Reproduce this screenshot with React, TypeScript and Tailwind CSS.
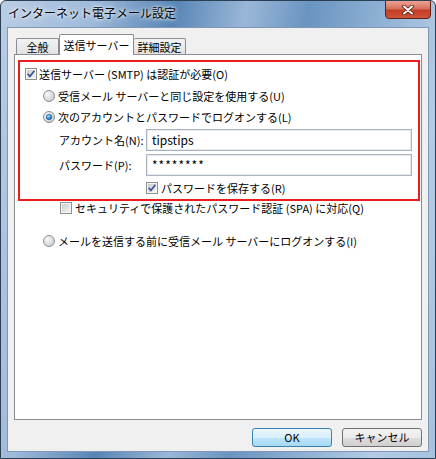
import React from 'react';

const font = "font-['Noto_Sans_CJK_JP','Noto_Sans',sans-serif]";

function CheckBox({ checked }: { checked?: boolean }) {
  return (
    <svg width="12" height="12" viewBox="0 0 12 12" className="shrink-0">
      <defs>
        <linearGradient id="cbFill" x1="0" y1="0" x2="1" y2="1">
          <stop offset="0" stopColor="#c9ccd1" />
          <stop offset="1" stopColor="#f4f4f4" />
        </linearGradient>
      </defs>
      <rect x="0.5" y="0.5" width="11" height="11" fill="#f6f6f6" stroke="#8e8f8f" />
      <rect x="2" y="2" width="8" height="8" fill="url(#cbFill)" />
      {checked && (
        <path d="M2.6 5.8 L4.9 8.4 L9.4 2.8" fill="none" stroke="#3d5592" strokeWidth="1.7" />
      )}
    </svg>
  );
}

function Radio({ checked }: { checked?: boolean }) {
  return (
    <svg width="12" height="12" viewBox="0 0 12 12" className="shrink-0">
      <defs>
        <radialGradient id="rbFill" cx="0.35" cy="0.35" r="0.8">
          <stop offset="0" stopColor="#f8f8f8" />
          <stop offset="1" stopColor="#c4c7cc" />
        </radialGradient>
        <radialGradient id="rbDot" cx="0.4" cy="0.35" r="0.7">
          <stop offset="0" stopColor="#9fe0ff" />
          <stop offset="0.6" stopColor="#2a8fd6" />
          <stop offset="1" stopColor="#14508c" />
        </radialGradient>
      </defs>
      <circle cx="6" cy="6" r="5.5" fill="url(#rbFill)" stroke="#8e8f8f" />
      {checked && <circle cx="6" cy="6" r="2.8" fill="url(#rbDot)" stroke="#1e4f80" strokeWidth="0.5" />}
    </svg>
  );
}

function Button({ label, primary }: { label: string; primary?: boolean }) {
  return (
    <div
      className={`w-[80px] h-[19px] rounded-[3px] border flex items-center justify-center text-[11px] text-black ${
        primary
          ? 'border-[#3c7fb1] bg-[linear-gradient(#eaf6fd_0%,#d9f0fc_50%,#bee6fd_51%,#a7d9f5_100%)]'
          : 'border-[#707070] bg-[linear-gradient(#f2f2f2_0%,#ebebeb_50%,#dddddd_51%,#cfcfcf_100%)]'
      }`}
    >
      {label}
    </div>
  );
}

export default function App() {
  return (
    <div
      className={`${font} w-[436px] h-[459px] flex flex-col border border-[#2c3e52] rounded-t-[6px] overflow-hidden bg-[linear-gradient(100deg,#b9cde4_0%,#9fbadb_18%,#5885b5_34%,#9ab7d8_48%,#6a94c1_60%,#8eb0d4_74%,#b3cbe5_88%,#a6c1df_100%)]`}
    >
      <div className="h-[26px] flex items-start justify-between shrink-0">
        <div className="pl-[7px] pt-[5px] text-[12px] leading-[14px] text-black [text-shadow:0_0_6px_#fff,0_0_3px_#fff]">
          インターネット電子メール設定
        </div>
        <div className="mr-[4px] w-[46px] h-[19px] -mt-px rounded-b-[4px] border border-[#5a2219] bg-[linear-gradient(#eba394_0%,#d8705d_45%,#c43d26_55%,#d0543a_100%)] flex items-center justify-center">
          <svg width="12" height="10" viewBox="0 0 12 10">
            <path d="M2 1.5 L10 8.5 M10 1.5 L2 8.5" stroke="#4a1a12" strokeWidth="3.6" strokeLinecap="round" />
            <path d="M2 1.5 L10 8.5 M10 1.5 L2 8.5" stroke="#fff" strokeWidth="2" strokeLinecap="round" />
          </svg>
        </div>
      </div>

      <div className="mx-[6px] mb-[6px] flex-1 flex flex-col bg-[#f0f0f0] border border-[#7f97b2]">
        {/* tabs */}
        <div className="pt-[6px] pl-[8px] h-[26px] flex items-end text-[11px] leading-[14px] text-black">
          <div className="w-[43px] h-[16px] border border-b-0 border-[#898c95] rounded-t-[2px] bg-[linear-gradient(#f3f3f3,#e2e2e2)] flex items-center justify-center">
            全般
          </div>
          <div className="relative z-10 w-[75px] h-[21px] -mb-px border border-b-0 border-[#898c95] rounded-t-[2px] bg-white flex items-start justify-center pt-[3px]">
            送信サーバー
          </div>
          <div className="w-[52px] h-[16px] border border-b-0 border-l-0 border-[#898c95] rounded-t-[2px] bg-[linear-gradient(#f3f3f3,#e2e2e2)] flex items-center justify-center">
            詳細設定
          </div>
        </div>

        {/* panel */}
        <div className="ml-[6px] w-[408px] h-[366px] border border-[#898c95] bg-white text-[11px] leading-[14px] text-black flex flex-col">
          <div className="ml-[3px] mt-[5px] w-[402px] h-[141px] border-2 border-[#ee1c1c] flex flex-col">
            <div className="mt-[2px] h-[20px] pl-[5px] flex items-center gap-[2px]">
              <CheckBox checked />
              <span>送信サーバー (SMTP) は認証が必要(O)</span>
            </div>
            <div className="mt-[2px] h-[20px] pl-[23px] flex items-center gap-[3px]">
              <Radio />
              <span>受信メール サーバーと同じ設定を使用する(U)</span>
            </div>
            <div className="mt-[1px] h-[20px] pl-[23px] flex items-center gap-[3px]">
              <Radio checked />
              <span>次のアカウントとパスワードでログオンする(L)</span>
            </div>
            <div className="mt-[2px] h-[22px] pl-[39px] flex items-center">
              <span className="w-[87px]">アカウント名(N):</span>
              <div className="w-[266px] h-[22px] border border-[#abb5c2] shadow-[inset_0_0_0_1px_#e3e9ef] bg-white flex items-center pl-[5px] text-[12px]">
                tipstips
              </div>
            </div>
            <div className="mt-[3px] h-[22px] pl-[39px] flex items-center">
              <span className="w-[87px]">パスワード(P):</span>
              <div className="w-[266px] h-[22px] border border-[#abb5c2] shadow-[inset_0_0_0_1px_#e3e9ef] bg-white flex items-center pl-[5px] text-[12px] tracking-[1px]">
                ********
              </div>
            </div>
            <div className="mt-[4px] h-[16px] pl-[126px] flex items-center gap-[3px]">
              <CheckBox checked />
              <span>パスワードを保存する(R)</span>
            </div>
          </div>

          <div className="h-[14px] ml-[45px] flex items-center gap-[3px]">
            <CheckBox />
            <span>セキュリティで保護されたパスワード認証 (SPA) に対応(Q)</span>
          </div>
          <div className="mt-[18px] h-[16px] ml-[28px] flex items-center gap-[3px]">
            <Radio />
            <span>メールを送信する前に受信メール サーバーにログオンする(I)</span>
          </div>
        </div>

        {/* buttons */}
        <div className="mt-[8px] mr-[6px] flex justify-end gap-[10px]">
          <Button label="OK" primary />
          <Button label="キャンセル" />
        </div>
      </div>
    </div>
  );
}
